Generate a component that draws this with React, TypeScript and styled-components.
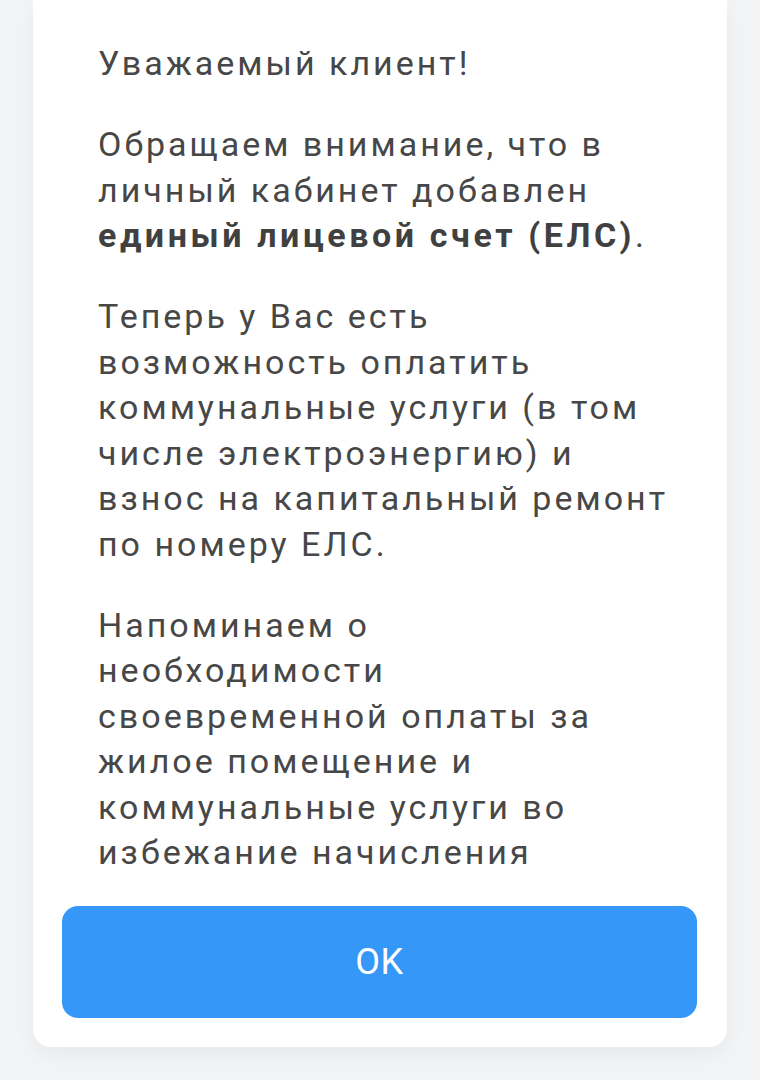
import React from "react";
import styled, { createGlobalStyle } from "styled-components";

const GlobalStyle = createGlobalStyle`
  html, body {
    margin: 0;
    padding: 0;
    background: #f3f4f6;
  }
  body {
    font-family: Roboto, "Noto Sans", "Liberation Sans", sans-serif;
  }
`;

const Page = styled.div`
  width: 760px;
  height: 1080px;
  padding: 0 33px;
  box-sizing: border-box;
  overflow: hidden;
`;

const Card = styled.div`
  background: #fff;
  border-radius: 0 0 18px 18px;
  box-shadow: 0 8px 24px rgba(0, 0, 0, 0.05);
  padding: 0 30px 29px 29px;
  display: flex;
  flex-direction: column;
`;

const Message = styled.div`
  height: 882px;
  overflow: hidden;
  padding: 41px 0 0 36px;
  box-sizing: border-box;
`;

const Paragraph = styled.p`
  margin: 0 0 35.5px;
  font-size: 34px;
  line-height: 45.5px;
  letter-spacing: 3px;
  color: #474747;
  white-space: nowrap;

  b {
    font-weight: 700;
    letter-spacing: 3.6px;
    color: #404040;
  }
`;

const OkButton = styled.button`
  margin-top: 24px;
  height: 112px;
  border: none;
  border-radius: 16px;
  background: #3597f7;
  color: #fff;
  font-family: Roboto, "Noto Sans", sans-serif;
  font-size: 36px;
  letter-spacing: 0.5px;
  cursor: pointer;
`;

const paragraphs: React.ReactNode[][] = [
  ["Уважаемый клиент!"],
  [
    "Обращаем внимание, что в",
    "личный кабинет добавлен",
    <>
      <b>единый лицевой счет (ЕЛС)</b>.
    </>,
  ],
  [
    "Теперь у Вас есть",
    "возможность оплатить",
    "коммунальные услуги (в том",
    "числе электроэнергию) и",
    "взнос на капитальный ремонт",
    "по номеру ЕЛС.",
  ],
  [
    "Напоминаем о",
    "необходимости",
    "своевременной оплаты за",
    "жилое помещение и",
    "коммунальные услуги во",
    "избежание начисления",
  ],
];

const App = () => {
  return (
    <>
      <GlobalStyle />
      <Page>
        <Card>
          <Message>
            {paragraphs.map((lines, i) => (
              <Paragraph key={i}>
                {lines.map((line, j) => (
                  <React.Fragment key={j}>
                    {j > 0 && <br />}
                    {line}
                  </React.Fragment>
                ))}
              </Paragraph>
            ))}
          </Message>
          <OkButton>OK</OkButton>
        </Card>
      </Page>
    </>
  );
};

export default App;
